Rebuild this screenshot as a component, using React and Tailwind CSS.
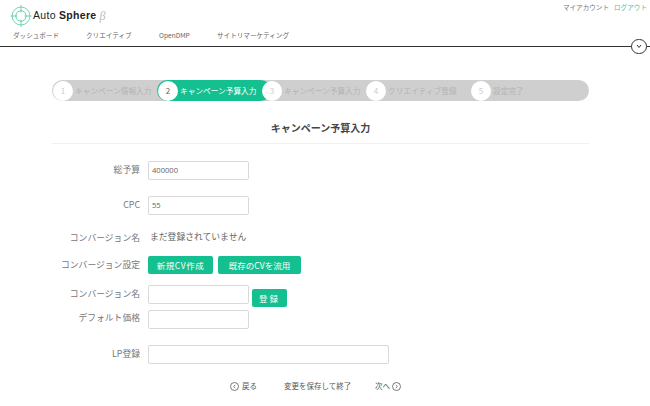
const font = { fontFamily: '"Noto Sans CJK JP", "Noto Sans", sans-serif' };

function Logo() {
  return (
    <svg width="24" height="24" viewBox="0 0 24 24" fill="none" stroke="#52c6a6" strokeWidth="0.8">
      <circle cx="12" cy="12" r="9" />
      <circle cx="12" cy="12" r="5.2" />
      <path d="M12 1V8.5M12 15.5V23M1.5 12H8.5M15.5 12H22.5" />
    </svg>
  );
}

function Chevron({ dir }) {
  return (
    <svg width="9" height="9" viewBox="0 0 9 9" fill="none" stroke="#444" strokeWidth="0.7">
      <circle cx="4.5" cy="4.5" r="4" />
      <path d={dir === "l" ? "M5.2 3L3.6 4.5L5.2 6" : "M3.8 3L5.4 4.5L3.8 6"} />
    </svg>
  );
}

const steps = [
  ["1", "キャンペーン情報入力", "w-[105px]"],
  ["2", "キャンペーン予算入力", "w-[114px] mr-[-10px]"],
  ["3", "キャンペーン予算入力", "w-[104px] relative"],
  ["4", "クリエイティブ登録", "w-[105px]"],
  ["5", "設定完了", "w-[98px]"],
];

function Label({ children }) {
  return <div className="w-[88px] shrink-0 text-right text-[8.8px] text-[#777] leading-none">{children}</div>;
}

function Input({ value = "", wide }) {
  return (
    <div className={`${wide ? "w-[241px]" : "w-[101px]"} h-[19px] bg-white border border-[#d9d9d9] rounded-[2px] flex items-center pl-[3px] text-[7.6px] text-[#666] shrink-0`} style={{ fontFamily: '"Open Sans", sans-serif' }}>
      {value}
    </div>
  );
}

function Btn({ children, cls }) {
  return (
    <div className={`${cls} h-[18px] bg-[#14c08f] rounded-[2px] text-white text-[8.5px] flex items-center justify-center`}>
      {children}
    </div>
  );
}

export default function App() {
  return (
    <div className="w-[650px] h-[406px] bg-white overflow-hidden" style={font}>
      <header className="h-[47px] border-b border-[#333] relative">
        <div className="flex justify-between h-[31px]">
          <div className="flex items-center pl-[9px]">
            <Logo />
            <span className="text-[10.5px] text-[#222] tracking-[0.3px]" style={{ fontFamily: '"Liberation Sans", sans-serif' }}>
              Auto <span className="font-bold">Sphere</span>
            </span>
            <span className="ml-[3px] text-[12px] italic text-[#bbb]" style={{ fontFamily: '"Liberation Serif", serif' }}>β</span>
          </div>
          <div className="flex gap-[5px] pr-[3px] pt-[2px] text-[6.6px] leading-[10px]">
            <span className="text-[#777]">マイアカウント</span>
            <span className="text-[#4fc3a1]">ログアウト</span>
          </div>
        </div>
        <nav className="flex pl-[13px] text-[6.6px] text-[#666] leading-[8px]">
          <span className="w-[73px]">ダッシュボード</span>
          <span className="w-[73px]">クリエイティブ</span>
          <span className="w-[58px]">OpenDMP</span>
          <span>サイトリマーケティング</span>
        </nav>
        <div className="absolute left-[631px] top-[39px] w-[16px] h-[15px] rounded-full bg-white border border-[#333] flex items-center justify-center">
          <svg width="6" height="5" viewBox="0 0 6 5" fill="none" stroke="#333" strokeWidth="1">
            <path d="M1 1L3 3.5L5 1" />
          </svg>
        </div>
      </header>

      <main className="px-[52px]">
        <div className="mt-[33px] w-[537px] h-[21px] rounded-full bg-[#cfcfcf] flex">
          {steps.map(([n, t, w]) => {
            const active = n === "2";
            return (
              <div key={n} className={`${w} h-[21px] flex items-center rounded-full shrink-0 ${active ? "bg-[#14c08f]" : ""}`}>
                <span className={`w-[20px] h-[20px] ml-[1px] rounded-full bg-white flex items-center justify-center text-[8px] shrink-0 ${active ? "text-[#666]" : "text-[#ccc]"}`}>
                  {n}
                </span>
                <span className={`ml-[2px] text-[7.7px] whitespace-nowrap ${active ? "text-white" : "text-[#b4b4b4]"}`}>{t}</span>
              </div>
            );
          })}
        </div>

        <div className="mt-[20px] pb-[8px] w-[537px] border-b border-[#f0f0f0] text-center text-[10px] font-bold text-[#444] leading-[14px]">
          キャンペーン予算入力
        </div>

        <div className="mt-[17px] flex items-center gap-[8px]">
          <Label>総予算</Label>
          <Input value="400000" />
        </div>
        <div className="mt-[16px] flex items-center gap-[8px]">
          <Label>CPC</Label>
          <Input value="55" />
        </div>
        <div className="mt-[17px] h-[13px] flex items-center gap-[10px]">
          <Label>コンバージョン名</Label>
          <span className="text-[8.8px] text-[#666] leading-none mt-[-3px]">まだ登録されていません</span>
        </div>
        <div className="mt-[11px] flex items-center gap-[8px]">
          <Label>コンバージョン設定</Label>
          <Btn cls="w-[65px] tracking-[0.5px]">新規CV作成</Btn>
          <Btn cls="w-[83px] ml-[-3px]">既存のCVを流用</Btn>
        </div>
        <div className="mt-[11px] flex items-start gap-[8px]">
          <div className="pt-[5px]"><Label>コンバージョン名</Label></div>
          <Input />
          <Btn cls="w-[35px] mt-[4px] ml-[-5px] tracking-[2px]">登録</Btn>
        </div>
        <div className="mt-[3px] flex items-center gap-[8px]">
          <div className="mt-[-2px]"><Label>デフォルト価格</Label></div>
          <Input />
        </div>
        <div className="mt-[16px] flex items-center gap-[8px]">
          <Label>LP登録</Label>
          <Input wide />
        </div>
        <div className="mt-[17px] flex items-center text-[7.5px] text-[#555] leading-[10px]">
          <div className="w-[178px]" />
          <span className="flex items-center gap-[3px] w-[54px]"><Chevron dir="l" />戻る</span>
          <span className="w-[91px]">変更を保存して終了</span>
          <span className="flex items-center gap-[2px]">次へ<Chevron dir="r" /></span>
        </div>
      </main>
    </div>
  );
}
